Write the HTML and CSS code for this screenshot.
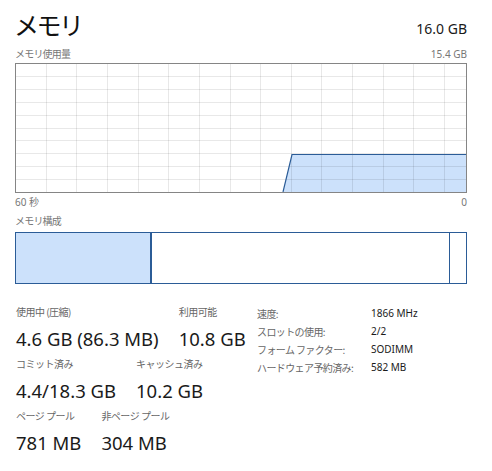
FILE: index.html
```html
<!DOCTYPE html>
<html lang="ja">
<head>
<meta charset="utf-8">
<link rel="stylesheet" href="styles.css">
</head>
<body>
<div class="page">
  <div class="header">
    <div class="title">メモリ</div>
    <div class="total">16.0 GB</div>
  </div>
  <div class="caption-row">
    <span>メモリ使用量</span>
    <span>15.4 GB</span>
  </div>
  <div class="graph">
    <svg width="450" height="128" viewBox="0 0 450 128">
      <polygon points="267,128 276,90 450,90 450,128" fill="#cce1fb"/>
      <g stroke="#000" stroke-opacity="0.09" stroke-width="1">
        <line x1="30.5" y1="0" x2="30.5" y2="128"/>
        <line x1="60.5" y1="0" x2="60.5" y2="128"/>
        <line x1="91.5" y1="0" x2="91.5" y2="128"/>
        <line x1="122.5" y1="0" x2="122.5" y2="128"/>
        <line x1="152.5" y1="0" x2="152.5" y2="128"/>
        <line x1="183.5" y1="0" x2="183.5" y2="128"/>
        <line x1="214.5" y1="0" x2="214.5" y2="128"/>
        <line x1="244.5" y1="0" x2="244.5" y2="128"/>
        <line x1="275.5" y1="0" x2="275.5" y2="128"/>
        <line x1="305.5" y1="0" x2="305.5" y2="128"/>
        <line x1="336.5" y1="0" x2="336.5" y2="128"/>
        <line x1="367.5" y1="0" x2="367.5" y2="128"/>
        <line x1="397.5" y1="0" x2="397.5" y2="128"/>
        <line x1="428.5" y1="0" x2="428.5" y2="128"/>
        <line x1="0" y1="12.5" x2="450" y2="12.5"/>
        <line x1="0" y1="25.5" x2="450" y2="25.5"/>
        <line x1="0" y1="38.5" x2="450" y2="38.5"/>
        <line x1="0" y1="51.5" x2="450" y2="51.5"/>
        <line x1="0" y1="64.5" x2="450" y2="64.5"/>
        <line x1="0" y1="76.5" x2="450" y2="76.5"/>
        <line x1="0" y1="89.5" x2="450" y2="89.5"/>
        <line x1="0" y1="102.5" x2="450" y2="102.5"/>
        <line x1="0" y1="115.5" x2="450" y2="115.5"/>
      </g>
      <polyline points="267,128 276,90.5 450,90.5" fill="none" stroke="#2b5c97" stroke-width="1.2"/>
    </svg>
  </div>
  <div class="axis-row">
    <span>60 秒</span>
    <span>0</span>
  </div>
  <div class="caption-row comp-caption">
    <span>メモリ構成</span>
  </div>
  <div class="comp-bar">
    <div class="seg seg-used"></div>
    <div class="seg seg-free"></div>
    <div class="seg seg-reserved"></div>
  </div>
  <div class="details">
    <div class="stats">
      <div class="stat-row">
        <div class="stat">
          <div class="stat-label">使用中 (圧縮)</div>
          <div class="stat-value">4.6 GB (86.3 MB)</div>
        </div>
        <div class="stat">
          <div class="stat-label">利用可能</div>
          <div class="stat-value">10.8 GB</div>
        </div>
      </div>
      <div class="stat-row">
        <div class="stat">
          <div class="stat-label">コミット済み</div>
          <div class="stat-value">4.4/18.3 GB</div>
        </div>
        <div class="stat">
          <div class="stat-label">キャッシュ済み</div>
          <div class="stat-value">10.2 GB</div>
        </div>
      </div>
      <div class="stat-row">
        <div class="stat">
          <div class="stat-label">ページ プール</div>
          <div class="stat-value">781 MB</div>
        </div>
        <div class="stat">
          <div class="stat-label">非ページ プール</div>
          <div class="stat-value">304 MB</div>
        </div>
      </div>
    </div>
    <div class="props">
      <div class="prop-label">速度:</div><div class="prop-value">1866 MHz</div>
      <div class="prop-label">スロットの使用:</div><div class="prop-value">2/2</div>
      <div class="prop-label">フォーム ファクター:</div><div class="prop-value">SODIMM</div>
      <div class="prop-label">ハードウェア予約済み:</div><div class="prop-value">582 MB</div>
    </div>
  </div>
</div>
</body>
</html>
```

FILE: styles.css
```css
html, body {
  margin: 0;
  padding: 0;
  background: #ffffff;
}
body {
  font-family: "Noto Sans", "Noto Sans CJK JP", sans-serif;
  color: #1a1a1a;
}
.page {
  width: 452px;
  padding: 6px 0 0 15px;
}
.header {
  display: flex;
  justify-content: space-between;
  align-items: flex-end;
  height: 36px;
}
.title {
  font-family: "Noto Sans CJK JP", sans-serif;
  font-size: 25px;
  line-height: 36px;
  letter-spacing: -2.5px;
  margin-left: -1px;
  color: #111;
}
.total {
  font-size: 14px;
  line-height: 20px;
  margin-bottom: 3px;
  color: #1a1a1a;
}
.caption-row {
  display: flex;
  justify-content: space-between;
  font-size: 10px;
  line-height: 14px;
  color: #777;
  margin-top: 5px;
  height: 16px;
}
.caption-row span:first-child {
  font-family: "Noto Sans CJK JP", sans-serif;
  letter-spacing: -0.8px;
}
.graph {
  border: 1px solid #858585;
  height: 128px;
  width: 450px;
}
.graph svg {
  display: block;
}
.axis-row {
  display: flex;
  justify-content: space-between;
  font-size: 10px;
  line-height: 14px;
  color: #777;
  margin-top: 2px;
}
.comp-caption {
  margin-top: 5px;
}
.comp-bar {
  display: flex;
  border: 1px solid #2b5c97;
  height: 50px;
  width: 450px;
  margin-top: 2px;
}
.seg {
  height: 100%;
}
.seg-used {
  width: 134px;
  background: #cce1fb;
  border-right: 2px solid #2b5c97;
}
.seg-free {
  flex: 1;
  border-right: 1px solid #2b5c97;
}
.seg-reserved {
  width: 16px;
}
.details {
  display: flex;
  margin-top: 21px;
}
.stats {
  display: flex;
  flex-direction: column;
  width: 242px;
}
.stat-row {
  display: flex;
  gap: 20px;
  margin-bottom: 6px;
}
.stat {
  display: flex;
  flex-direction: column;
  margin-left: 1px;
}
.stat + .stat {
  margin-left: 0;
}
.stat-label {
  font-family: "Noto Sans CJK JP", sans-serif;
  font-size: 10px;
  line-height: 14px;
  color: #666;
  letter-spacing: -0.5px;
}
.stat-value {
  font-size: 18.5px;
  line-height: 25px;
  color: #1a1a1a;
  margin-top: 7px;
}
.props {
  display: grid;
  grid-template-columns: 114px auto;
  grid-auto-rows: 18px;
  align-items: center;
  font-size: 10px;
  margin-top: -1px;
}
.prop-label {
  font-family: "Noto Sans CJK JP", sans-serif;
  color: #666;
  letter-spacing: -0.6px;
}
.prop-value {
  color: #1a1a1a;
}
```
